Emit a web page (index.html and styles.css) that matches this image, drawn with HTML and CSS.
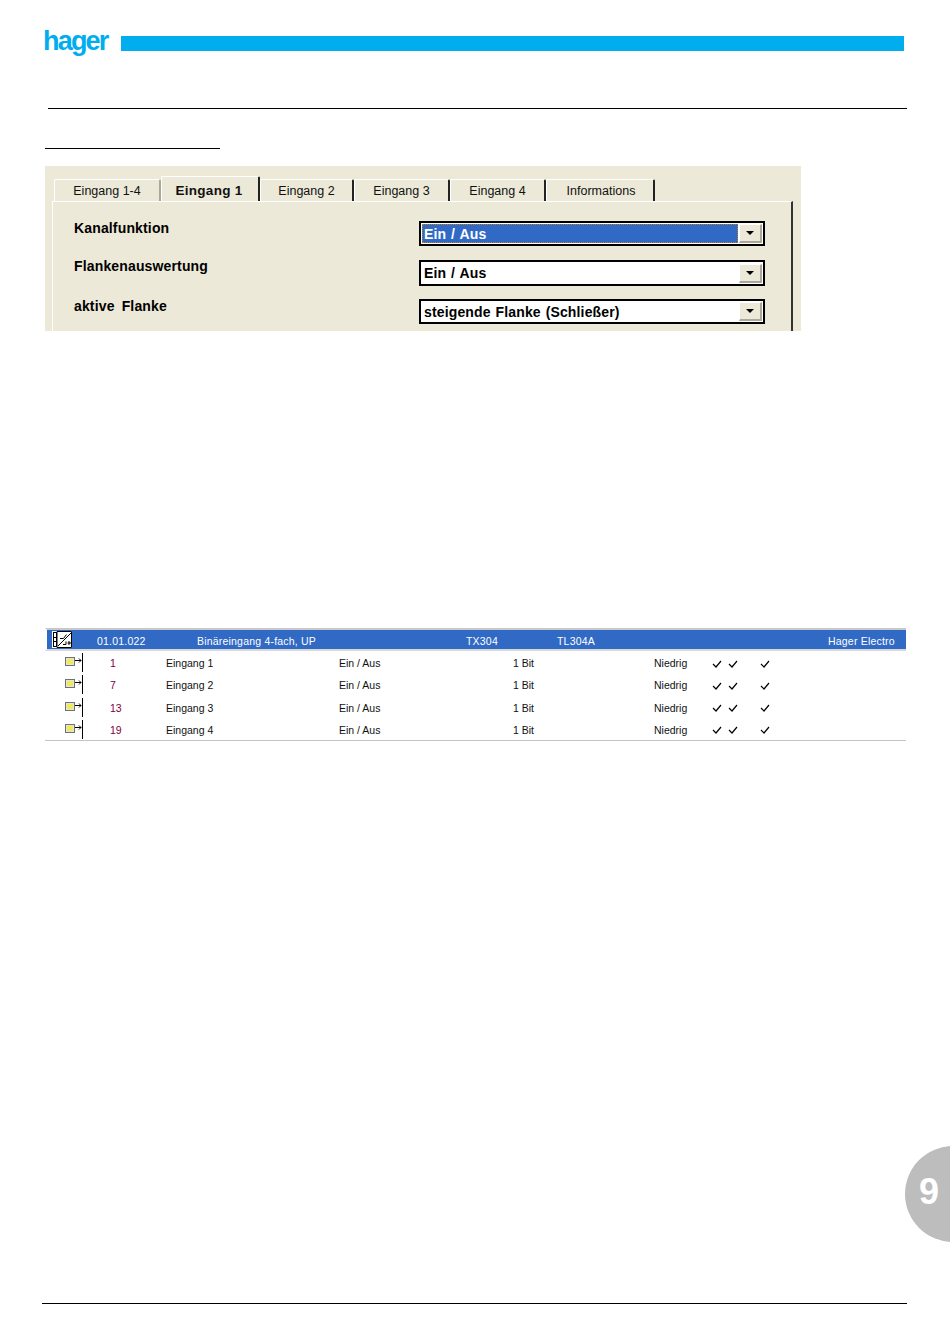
FILE: index.html
```html
<!DOCTYPE html>
<html lang="de">
<head>
<meta charset="utf-8">
<title>Eingang 1</title>
<link rel="stylesheet" href="styles.css">
</head>
<body>
<div class="page">
  <header class="brand">
    <span class="logo">hager</span>
    <div class="brand-bar"></div>
  </header>
  <div class="rule-top"></div>
  <div class="rule-short"></div>

  <section class="dialog">
    <div class="tabs">
      <div class="tab tab-a">Eingang 1-4</div>
      <div class="tab tab-active">Eingang 1</div>
      <div class="tab tab-b tab-first">Eingang 2</div>
      <div class="tab tab-b">Eingang 3</div>
      <div class="tab tab-b">Eingang 4</div>
      <div class="tab tab-c">Informations</div>
    </div>
    <div class="panel">
      <div class="field field-1">
        <span class="label">Kanalfunktion</span>
        <div class="combo combo-focus"><span class="combo-text">Ein / Aus</span><span class="combo-btn"><i class="arrow"></i></span></div>
      </div>
      <div class="field field-2">
        <span class="label">Flankenauswertung</span>
        <div class="combo"><span class="combo-text">Ein / Aus</span><span class="combo-btn"><i class="arrow"></i></span></div>
      </div>
      <div class="field field-3">
        <span class="label">aktive Flanke</span>
        <div class="combo"><span class="combo-text">steigende Flanke (Schließer)</span><span class="combo-btn"><i class="arrow"></i></span></div>
      </div>
    </div>
  </section>

  <section class="table">
    <div class="head-row">
      <span class="head-icon">
        <svg width="20" height="17" viewBox="0 0 20 17"><rect width="20" height="17" fill="#fff"/><path d="M1.500 1v15M4.500 1v15M1 1.500h4M1 15.500h4M1 6.500h4M1 10.500h4M5 .5h14.500v16H5zM6 15 19 2M8 7.500h3.500l3-4M11 13.500h3v-3M17 10v4M15.500 12h3.500" fill="none" stroke="#000"/></svg>
      </span>
      <span>01.01.022</span>
      <span>Binäreingang 4-fach, UP</span>
      <span>TX304</span>
      <span>TL304A</span>
      <span class="head-maker">Hager Electro</span>
    </div>
    <div class="row">
      <span class="row-icon"><svg width="19" height="19" viewBox="0 0 19 19"><rect x="1.500" y="4.500" width="9" height="8" fill="#e4e4e4" stroke="#707070"/><rect x="3" y="6" width="6" height="5" fill="#f0ec50"/><path d="M11 7.500h6M15 5.500l2 2-2 2" fill="none" stroke="#000"/><path d="M18.500 0v19" stroke="#000"/></svg></span>
      <span class="num">1</span><span>Eingang 1</span><span>Ein / Aus</span><span>1 Bit</span><span>Niedrig</span>
      <svg class="check" width="10" height="8" viewBox="0 0 10 8"><path d="M1 4l3 3 5-6" fill="none" stroke="#000" stroke-width="1.200"/></svg>
      <svg class="check" width="10" height="8" viewBox="0 0 10 8"><path d="M1 4l3 3 5-6" fill="none" stroke="#000" stroke-width="1.200"/></svg>
      <svg class="check" width="10" height="8" viewBox="0 0 10 8"><path d="M1 4l3 3 5-6" fill="none" stroke="#000" stroke-width="1.200"/></svg>
    </div>
    <div class="row">
      <span class="row-icon"><svg width="19" height="19" viewBox="0 0 19 19"><rect x="1.500" y="4.500" width="9" height="8" fill="#e4e4e4" stroke="#707070"/><rect x="3" y="6" width="6" height="5" fill="#f0ec50"/><path d="M11 7.500h6M15 5.500l2 2-2 2" fill="none" stroke="#000"/><path d="M18.500 0v19" stroke="#000"/></svg></span>
      <span class="num">7</span><span>Eingang 2</span><span>Ein / Aus</span><span>1 Bit</span><span>Niedrig</span>
      <svg class="check" width="10" height="8" viewBox="0 0 10 8"><path d="M1 4l3 3 5-6" fill="none" stroke="#000" stroke-width="1.200"/></svg>
      <svg class="check" width="10" height="8" viewBox="0 0 10 8"><path d="M1 4l3 3 5-6" fill="none" stroke="#000" stroke-width="1.200"/></svg>
      <svg class="check" width="10" height="8" viewBox="0 0 10 8"><path d="M1 4l3 3 5-6" fill="none" stroke="#000" stroke-width="1.200"/></svg>
    </div>
    <div class="row">
      <span class="row-icon"><svg width="19" height="19" viewBox="0 0 19 19"><rect x="1.500" y="4.500" width="9" height="8" fill="#e4e4e4" stroke="#707070"/><rect x="3" y="6" width="6" height="5" fill="#f0ec50"/><path d="M11 7.500h6M15 5.500l2 2-2 2" fill="none" stroke="#000"/><path d="M18.500 0v19" stroke="#000"/></svg></span>
      <span class="num">13</span><span>Eingang 3</span><span>Ein / Aus</span><span>1 Bit</span><span>Niedrig</span>
      <svg class="check" width="10" height="8" viewBox="0 0 10 8"><path d="M1 4l3 3 5-6" fill="none" stroke="#000" stroke-width="1.200"/></svg>
      <svg class="check" width="10" height="8" viewBox="0 0 10 8"><path d="M1 4l3 3 5-6" fill="none" stroke="#000" stroke-width="1.200"/></svg>
      <svg class="check" width="10" height="8" viewBox="0 0 10 8"><path d="M1 4l3 3 5-6" fill="none" stroke="#000" stroke-width="1.200"/></svg>
    </div>
    <div class="row">
      <span class="row-icon"><svg width="19" height="19" viewBox="0 0 19 19"><rect x="1.500" y="4.500" width="9" height="8" fill="#e4e4e4" stroke="#707070"/><rect x="3" y="6" width="6" height="5" fill="#f0ec50"/><path d="M11 7.500h6M15 5.500l2 2-2 2" fill="none" stroke="#000"/><path d="M18.500 0v19" stroke="#000"/></svg></span>
      <span class="num">19</span><span>Eingang 4</span><span>Ein / Aus</span><span>1 Bit</span><span>Niedrig</span>
      <svg class="check" width="10" height="8" viewBox="0 0 10 8"><path d="M1 4l3 3 5-6" fill="none" stroke="#000" stroke-width="1.200"/></svg>
      <svg class="check" width="10" height="8" viewBox="0 0 10 8"><path d="M1 4l3 3 5-6" fill="none" stroke="#000" stroke-width="1.200"/></svg>
      <svg class="check" width="10" height="8" viewBox="0 0 10 8"><path d="M1 4l3 3 5-6" fill="none" stroke="#000" stroke-width="1.200"/></svg>
    </div>
  </section>

  <div class="rule-bottom"></div>
  <div class="chapter"><span class="chapter-num">9</span></div>
</div>
</body>
</html>
```
FILE: styles.css
```css
html, body {
  margin: 0;
  padding: 0;
  background: #fff;
}
.page {
  position: relative;
  width: 950px;
  height: 1344px;
  overflow: hidden;
  font-family: "Liberation Sans", Arial, sans-serif;
  color: #000;
}
.brand {
  display: flex;
  align-items: flex-start;
  height: 60px;
  padding: 0 46px 0 43px;
}
.logo {
  width: 78px;
  margin-top: 25px;
  font-size: 27px;
  line-height: 32px;
  font-weight: 700;
  letter-spacing: -1.800px;
  color: #00adef;
}
.brand-bar {
  flex: 1;
  height: 15px;
  margin-top: 36px;
  background: #00adef;
}
.rule-top {
  height: 1px;
  margin: 48px 43px 0 48px;
  background: #000;
}
.rule-short {
  width: 175px;
  height: 1px;
  margin: 39px 0 0 45px;
  background: #000;
}
.dialog {
  width: 756px;
  height: 165px;
  margin: 17px 0 0 45px;
  overflow: hidden;
  background: #ece9d8;
}
.tabs {
  display: flex;
  align-items: flex-end;
  height: 35px;
  padding-left: 9px;
}
.tab {
  box-sizing: border-box;
  height: 22px;
  padding-top: 4px;
  font-size: 12.500px;
  line-height: 15px;
  text-align: center;
  color: #111;
  border-top: 1px solid #fff;
  border-left: 1px solid #fff;
  border-right: 2px solid #222;
  border-radius: 2px 2px 0 0;
}
.tab-a {
  width: 107px;
  border-right: 2px solid #aca899;
}
.tab-active {
  width: 99px;
  height: 25px;
  padding: 6px 2px 0 0;
  font-weight: 700;
  font-size: 13.500px;
  letter-spacing: 0.3px;
}
.tab-b {
  width: 96px;
}
.tab-first {
  width: 94px;
}
.tab-c {
  width: 109px;
  padding-left: 2px;
}
.panel {
  box-sizing: border-box;
  width: 741px;
  height: 130px;
  margin-left: 7px;
  padding-left: 21px;
  border-top: 1px solid #fff;
  border-left: 1px solid #fff;
  border-right: 2px solid #333;
}
.field {
  display: flex;
  justify-content: space-between;
  align-items: flex-start;
  padding-right: 26px;
}
.field-1 {
  margin-top: 19px;
}
.field-2 {
  margin-top: 14px;
}
.field-3 {
  margin-top: 13px;
}
.label {
  margin-top: -1px;
  font-size: 14px;
  line-height: 16px;
  font-weight: 700;
  letter-spacing: 0.15px;
  word-spacing: 3px;
}
.field-2 .label {
  margin-top: -2px;
}
.combo {
  box-sizing: border-box;
  display: flex;
  align-items: center;
  justify-content: space-between;
  width: 346px;
  height: 25px;
  padding: 1px;
  background: #fff;
  border: 2px solid #000;
}
.field-2 .combo {
  height: 26px;
}
.combo-text {
  flex: 1;
  padding-left: 2px;
  font-size: 14px;
  line-height: 18px;
  font-weight: 700;
  letter-spacing: 0.15px;
  word-spacing: 0.8px;
}
.combo-focus .combo-text {
  align-self: stretch;
  line-height: 20px;
  color: #fff;
  background: #316ac5;
  outline: 1px dotted #c08020;
  outline-offset: -1px;
}
.combo-btn {
  box-sizing: border-box;
  display: flex;
  align-items: center;
  justify-content: center;
  flex: none;
  width: 23px;
  height: 19px;
  margin-left: 1px;
  background: #ece9d8;
  border-top: 1px solid #fff;
  border-left: 1px solid #fff;
  border-right: 2px solid #aca899;
  border-bottom: 2px solid #aca899;
}
.arrow {
  width: 0;
  height: 0;
  border-left: 4px solid transparent;
  border-right: 4px solid transparent;
  border-top: 4px solid #000;
}
.table {
  width: 861px;
  margin: 297px 0 0 45px;
  font-size: 10.500px;
  line-height: 12px;
  color: #111;
  border-bottom: 1px solid #c4c4c4;
}
.head-row {
  display: grid;
  grid-template-columns: 50px 100px 269px 91px 1fr 78px;
  align-items: center;
  height: 17px;
  padding-top: 2px;
  letter-spacing: 0.2px;
  color: #fff;
  background: #316ac5;
  border-top: 2px solid #c8c8c8;
  border-bottom: 2px solid #d8d8d8;
  border-left: 2px solid #fff;
}
.head-icon {
  display: flex;
  height: 17px;
  margin-top: -2px;
  padding-left: 5px;
}
.head-maker {
  white-space: nowrap;
}
.row {
  box-sizing: border-box;
  display: grid;
  grid-template-columns: 65px 56px 173px 174px 141px 58px 16px 32px 1fr;
  align-items: center;
  height: 22.250px;
  padding-top: 2px;
}
.row-icon {
  display: flex;
  padding-left: 19px;
  align-self: start;
}
.num {
  color: #800040;
}
.check {
  display: block;
  margin-top: 1px;
}
.rule-bottom {
  height: 1px;
  margin: 562px 43px 0 42px;
  background: #000;
}
.chapter {
  position: absolute;
  left: 905px;
  top: 1146px;
  box-sizing: border-box;
  width: 96px;
  height: 96px;
  border-radius: 50%;
  padding: 25px 0 0 14px;
  background: #bdbdbd;
}
.chapter-num {
  font-size: 36px;
  line-height: 42px;
  font-weight: 700;
  color: #fff;
}
```
